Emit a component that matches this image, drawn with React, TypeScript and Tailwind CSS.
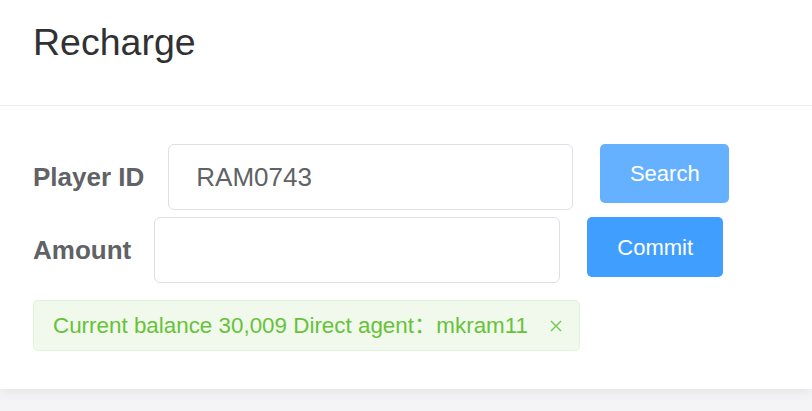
import { useState } from 'react';

export default function App() {
  const [playerId, setPlayerId] = useState('RAM0743');
  const [amount, setAmount] = useState('');
  const [showAlert, setShowAlert] = useState(true);

  return (
    <div
      className="min-h-screen bg-[#f4f4f6]"
      style={{ fontFamily: '"Liberation Sans", Arial, "Noto Sans CJK SC", sans-serif' }}
    >
      <div className="bg-white shadow-[0_2px_12px_rgba(0,0,0,0.08)]">
        {/* Header */}
        <div className="h-[106px] px-[33px] pt-[24px] border-b border-[#ebeef5]">
          <h1 className="text-[37.5px] leading-none text-[#303133]">Recharge</h1>
        </div>

        {/* Form */}
        <div className="px-[33px] pt-[38px] pb-[38px]">
          <div className="flex items-start">
            <label className="self-center mr-[24px] text-[26px] font-bold text-[#606266]">Player ID</label>
            <input
              value={playerId}
              onChange={(e) => setPlayerId(e.target.value)}
              className="w-[405px] h-[66px] px-[27px] text-[26px] text-[#606266] border border-[#dcdfe6] rounded-[6px] outline-none"
            />
            <button className="ml-[27px] w-[129px] h-[59px] rounded-[5px] bg-[#66b1ff] text-white text-[22px]">
              Search
            </button>
          </div>

          <div className="flex items-start mt-[7px]">
            <label className="self-center mr-[23px] text-[26px] font-bold text-[#606266]">Amount</label>
            <input
              value={amount}
              onChange={(e) => setAmount(e.target.value)}
              className="w-[406px] h-[66px] px-[27px] text-[26px] text-[#606266] border border-[#dcdfe6] rounded-[6px] outline-none"
            />
            <button className="ml-[27px] w-[136px] h-[60px] rounded-[5px] bg-[#409eff] text-white text-[22px]">
              Commit
            </button>
          </div>

          {showAlert && (
            <div className="mt-[17px] w-[547px] h-[51px] flex items-center pl-[19px] pr-[20px] bg-[#f0f9eb] border border-[#e1f3d8] rounded-[5px]">
              <span className="text-[22.4px] text-[#67c23a] whitespace-nowrap">
                Current balance 30,009 Direct agent：mkram11
              </span>
              <button onClick={() => setShowAlert(false)} className="ml-[22px] text-[#7cc95a]">
                <svg width="12" height="12" viewBox="0 0 12 12" fill="none" stroke="currentColor" strokeWidth="1.5">
                  <path d="M1 1L11 11M11 1L1 11" />
                </svg>
              </button>
            </div>
          )}
        </div>
      </div>
    </div>
  );
}
